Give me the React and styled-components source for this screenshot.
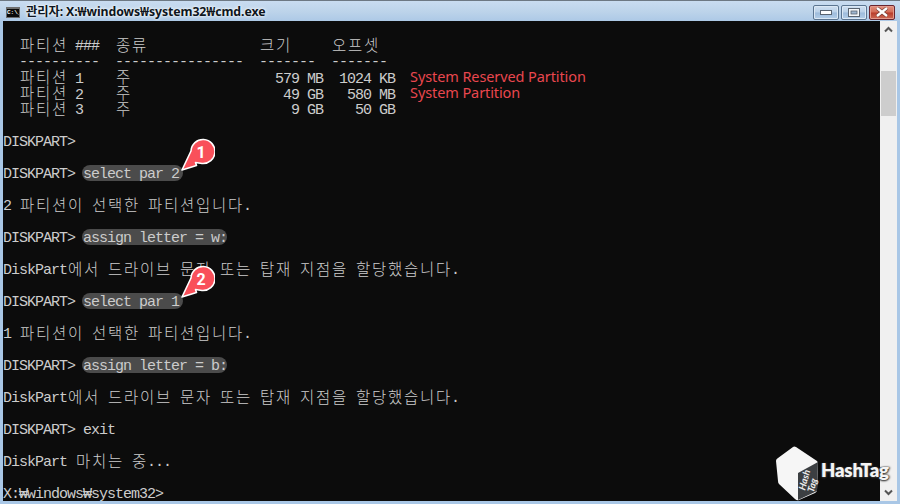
import React from 'react'
import styled, { createGlobalStyle } from 'styled-components'

const Global = createGlobalStyle`
  html, body { margin: 0; padding: 0; background: #0c0c0c; overflow: hidden; }
`

const Window = styled.div`
  position: relative;
  width: 900px;
  height: 504px;
  display: flex;
  flex-direction: column;
  overflow: hidden;
  background: #a9c7e6;
`
const TitleBar = styled.div`
  height: 21px;
  flex: none;
  box-sizing: border-box;
  display: flex;
  align-items: center;
  gap: 6px;
  padding: 1px 5px 0 6px;
  border-top: 1px solid #6d7883;
  background: linear-gradient(180deg, #c9dcf0 0%, #bcd3ea 55%, #adc9e6 100%);
`
const ConIcon = styled.div`
  width: 14px;
  height: 11px;
  margin-top: 1px;
  flex: none;
  box-sizing: border-box;
  border: 1px solid #6e6e6e;
  border-top-width: 2px;
  background: #0a0a0a;
  color: #fff;
  font: bold 6px/8px "Liberation Mono", monospace;
  overflow: hidden;
  white-space: pre;
`
const Title = styled.div`
  flex: 1;
  font: bold 12.3px/16px "Noto Sans", "Noto Sans CJK KR", sans-serif;
  letter-spacing: -0.1px;
  color: #0d1520;
  text-shadow: 0 0 4px #fff, 0 0 2px #fff;
  white-space: pre;
`
const Buttons = styled.div`
  display: flex;
  gap: 2px;
  margin-top: 1px;
`
const WinButton = styled.div`
  width: ${({ $w }) => $w}px;
  height: 13px;
  display: flex;
  align-items: center;
  justify-content: center;
  border-radius: 2px;
  border: 1px solid ${({ $close }) => ($close ? '#6a2530' : '#5b7591')};
  box-shadow: inset 0 0 0 1px ${({ $close }) => ($close ? '#e39a8c' : '#dbe8f5')};
  background: ${({ $close }) =>
    $close
      ? 'linear-gradient(180deg, #e2907f 0%, #d26a55 48%, #b83c2b 52%, #cc6a55 100%)'
      : 'linear-gradient(180deg, #cfe0f1 0%, #b9d0e8 48%, #9dbbdb 52%, #b4cee8 100%)'};
`
const Body = styled.div`
  flex: 1;
  display: flex;
  min-height: 0;
  padding: 0 3px 3px;
`
const Console = styled.div`
  flex: 1;
  background: #0c0c0c;
  color: #cccccc;
  font: 15px/20px "Liberation Mono", "DejaVu Sans Mono", monospace;
  letter-spacing: -1px;
`
const Row = styled.div`
  height: 16px;
  white-space: pre;
`
const Ko = styled.span`
  display: inline-block;
  vertical-align: top;
  width: 16px;
  height: 16px;
  text-align: center;
  letter-spacing: 0;
  font: 300 15.5px/15px "Noto Sans CJK KR", sans-serif;
`
const Note = styled.span`
  margin-left: 15px;
  vertical-align: 1px;
  font: 14.5px/14px "Noto Sans", "Open Sans", sans-serif;
  letter-spacing: -0.1px;
  color: #e9474f;
`
const Pill = styled.span`
  display: inline-block;
  position: relative;
  height: 16px;
  margin-left: -1px;
  padding: 0 ${({ $tail }) => $tail}px 0 1px;
  border-radius: 8px;
  background: #4b4b4b;
`
const Badge = styled.svg`
  position: absolute;
  left: ${({ $left }) => $left}px;
  top: ${({ $top }) => $top}px;
  width: 34px;
  height: 34px;
`
const Scrollbar = styled.div`
  width: 17px;
  flex: none;
  display: flex;
  flex-direction: column;
  background: #f0f0f0;
`
const ScrollArrow = styled.div`
  height: 17px;
  flex: none;
  display: flex;
  align-items: center;
  justify-content: center;
`
const Track = styled.div`
  flex: 1;
  padding: 33px 1px 0;
`
const Thumb = styled.div`
  height: 45px;
  background: #cdcdcd;
`
const Logo = styled.div`
  position: absolute;
  left: 775px;
  top: 446px;
  display: flex;
  align-items: flex-start;
  pointer-events: none;
`
const LogoText = styled.div`
  margin: 13px 0 0 1px;
  font: 800 18.5px/22px "Lato", "Roboto", sans-serif;
  letter-spacing: -0.2px;
  color: #f4f4f4;
  text-shadow: 0 1px 2px #333, 1px 0 2px #333, -1px 0 1px #333;
`

// hangul is two cells wide in the console, everything else is one
function Cells({ text }) {
  return text.split(/([\uac00-\ud7a3])/).map((part, i) =>
    /[\uac00-\ud7a3]/.test(part) ? <Ko key={i}>{part}</Ko> : part ? <span key={i}>{part}</span> : null
  )
}

function Line({ text = '', note, pill, tail = 0, children }) {
  return (
    <Row>
      <Cells text={text} />
      {pill && (
        <Pill $tail={tail}>
          {pill}
          {children}
        </Pill>
      )}
      {note && <Note>{note}</Note>}
    </Row>
  )
}

function Callout({ n, left, top }) {
  return (
    <Badge $left={left} $top={top} viewBox="0 0 34 34">
      <path
        d="M1 32 L10 13 A12 12 0 1 1 21 25.5 L14.5 24.5 L15.5 27.5 Z"
        fill="#f9505a"
        stroke="#fff"
        strokeWidth="1.6"
        strokeLinejoin="round"
      />
      <text x="19.5" y="19.5" textAnchor="middle" fill="#fff" fontFamily="Roboto, sans-serif" fontWeight="700" fontSize="16">
        {n}
      </text>
    </Badge>
  )
}

export default function App() {
  return (
    <Window>
      <Global />
      <TitleBar>
        <ConIcon>{'C:\\_'}</ConIcon>
        <Title>관리자: X:₩windows₩system32₩cmd.exe</Title>
        <Buttons>
          <WinButton $w={24}>
            <svg width="12" height="6" viewBox="0 0 12 6">
              <rect x="0.5" y="1.5" width="11" height="4" fill="#fff" stroke="#5a6470" />
            </svg>
          </WinButton>
          <WinButton $w={24}>
            <svg width="12" height="9" viewBox="0 0 12 9">
              <rect x="0.5" y="0.5" width="11" height="8" fill="#f4f7fa" stroke="#5a6470" />
              <rect x="3" y="3" width="6" height="3" fill="#9db6d0" stroke="#5a6470" strokeWidth="0.8" />
            </svg>
          </WinButton>
          <WinButton $w={24} $close>
            <svg width="14" height="10" viewBox="0 0 14 10">
              <path d="M2 1 L12 9 M12 1 L2 9" stroke="#6d3a33" strokeWidth="3.6" />
              <path d="M2 1 L12 9 M12 1 L2 9" stroke="#fff" strokeWidth="2.4" />
            </svg>
          </WinButton>
        </Buttons>
      </TitleBar>
      <Body>
        <Console>
          <Line />
          <Line text="  파티션 ###  종류              크기     오프셋" />
          <Line text="  ----------  ----------------  -------  -------" />
          <Line text="  파티션 1    주                  579 MB  1024 KB" note="System Reserved Partition" />
          <Line text="  파티션 2    주                   49 GB   580 MB" note="System Partition" />
          <Line text="  파티션 3    주                    9 GB    50 GB" />
          <Line />
          <Line text="DISKPART>" />
          <Line />
          <Line text="DISKPART> " pill="select par 2" tail={4}>
            <Callout n="1" left={99} top={-27} />
          </Line>
          <Line />
          <Line text="2 파티션이 선택한 파티션입니다." />
          <Line />
          <Line text="DISKPART> " pill="assign letter = w:" />
          <Line />
          <Line text="DiskPart에서 드라이브 문자 또는 탑재 지점을 할당했습니다." />
          <Line />
          <Line text="DISKPART> " pill="select par 1" tail={4}>
            <Callout n="2" left={99} top={-28} />
          </Line>
          <Line />
          <Line text="1 파티션이 선택한 파티션입니다." />
          <Line />
          <Line text="DISKPART> " pill="assign letter = b:" />
          <Line />
          <Line text="DiskPart에서 드라이브 문자 또는 탑재 지점을 할당했습니다." />
          <Line />
          <Line text="DISKPART> exit" />
          <Line />
          <Line text="DiskPart 마치는 중..." />
          <Line />
          <Line text="X:₩windows₩system32>" />
        </Console>
        <Scrollbar>
          <ScrollArrow>
            <svg width="9" height="7" viewBox="0 0 9 7">
              <path d="M1 5.5 L4.5 2 L8 5.5" fill="none" stroke="#555" strokeWidth="2" />
            </svg>
          </ScrollArrow>
          <Track>
            <Thumb />
          </Track>
          <ScrollArrow>
            <svg width="9" height="7" viewBox="0 0 9 7">
              <path d="M1 1.5 L4.5 5 L8 1.5" fill="none" stroke="#555" strokeWidth="2" />
            </svg>
          </ScrollArrow>
        </Scrollbar>
      </Body>
      <Logo>
        <svg width="45" height="55" viewBox="0 0 45 55">
          <path d="M18 1 Q19 0 21 1 L42 15 Q43 16 43 18 L42 44 Q42 46 40 47 L24 54 Q22 55 20 53 L4 38 Q3 37 3 35 L1 15 Q1 13 3 12 Z" fill="#f6f6f6" />
          <path d="M23 27 L43 16 L42 45 L23 54 Z" fill="#3c3f42" />
          <g transform="translate(33 37) rotate(-75)" fill="#eee" fontFamily="Lato, sans-serif" fontWeight="700" fontStyle="italic" fontSize="9.5" textAnchor="middle">
            <text x="2" y="-1">Hash</text>
            <text x="-1" y="8">Tag</text>
          </g>
        </svg>
        <LogoText>HashTag</LogoText>
      </Logo>
    </Window>
  )
}
